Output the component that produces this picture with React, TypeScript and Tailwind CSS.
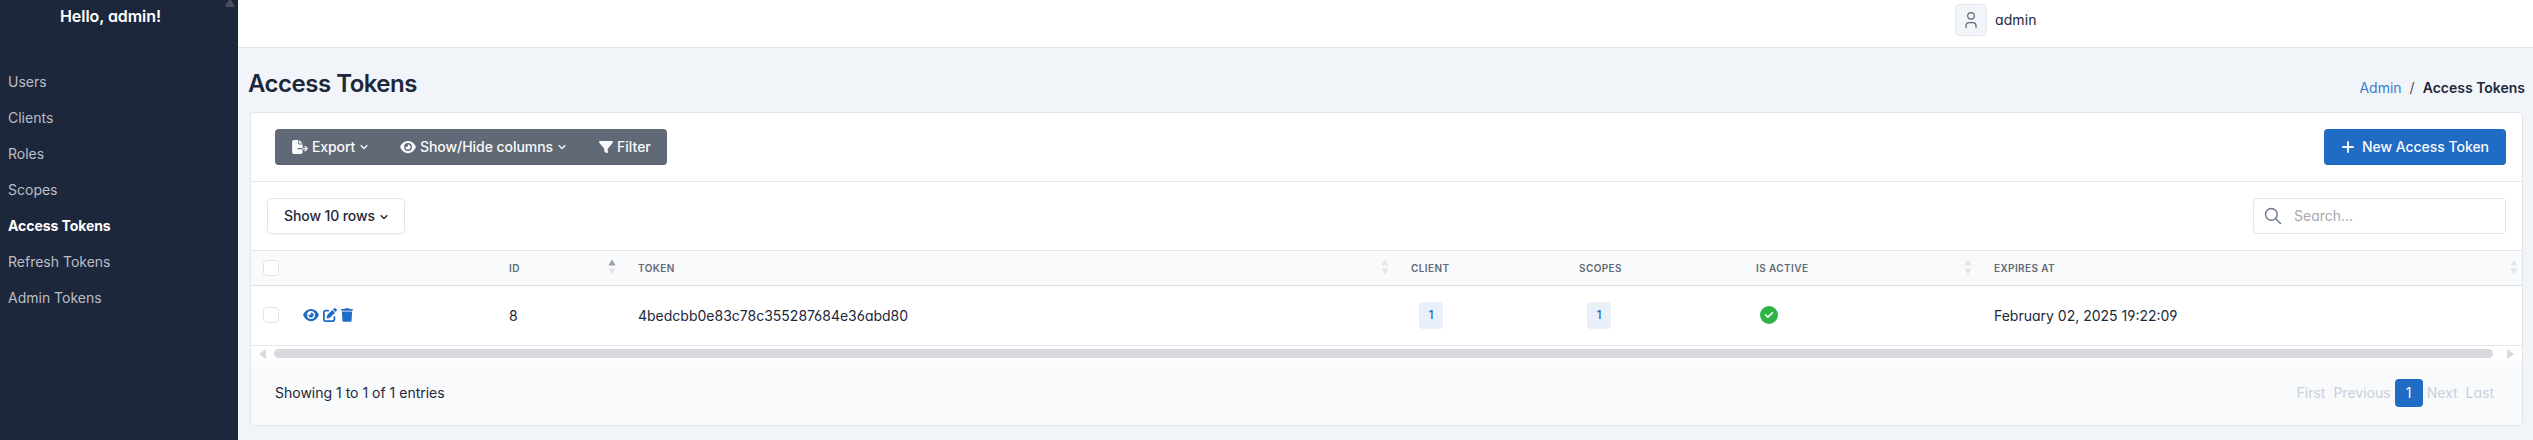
import React from "react";

const NAV = ["Users", "Clients", "Roles", "Scopes", "Access Tokens", "Refresh Tokens", "Admin Tokens"];

function Icon({ d, viewBox, className }: { d: string; viewBox: string; className: string }) {
  return (
    <svg viewBox={viewBox} className={className} fill="currentColor" aria-hidden="true">
      <path d={d} />
    </svg>
  );
}

const EYE =
  "M288 32c-80.8 0-145.500 36.800-192.600 80.600C48.600 156 17.300 208 2.500 243.700c-3.300 7.900-3.300 16.700 0 24.600C17.300 304 48.600 356 95.400 399.400C142.500 443.200 207.200 480 288 480s145.500-36.800 192.600-80.600c46.800-43.500 78.100-95.400 93-131.100c3.300-7.900 3.300-16.700 0-24.600c-14.900-35.700-46.200-87.700-93-131.100C433.500 68.800 368.800 32 288 32zM144 256a144 144 0 1 1 288 0 144 144 0 1 1 -288 0zm144-64c0 35.300-28.700 64-64 64c-7.100 0-13.900-1.200-20.300-3.300c-5.500-1.800-11.900 1.600-11.700 7.400c.3 6.900 1.300 13.800 3.200 20.700c13.700 51.200 66.400 81.600 117.600 67.900s81.600-66.400 67.900-117.600c-11.100-41.500-47.800-69.400-88.600-71.100c-5.800-.2-9.200 6.100-7.400 11.700c2.100 6.400 3.300 13.200 3.300 20.300z";
const PEN =
  "M471.600 21.400c-21.900-21.900-57.300-21.900-79.200 0L362.300 51.700l97.900 97.900 30.100-30.100c21.900-21.900 21.900-57.300 0-79.200L471.600 21.400zm-299.200 220c-6.100 6.100-10.800 13.600-13.500 21.900l-29.600 88.800c-2.900 8.600-.6 18.100 5.800 24.600s15.900 8.700 24.600 5.800l88.800-29.600c8.200-2.700 15.700-7.400 21.900-13.500L437.700 172.300 339.700 74.300 172.400 241.400zM96 64C43 64 0 107 0 160L0 416c0 53 43 96 96 96l256 0c53 0 96-43 96-96l0-96c0-17.700-14.300-32-32-32s-32 14.300-32 32l0 96c0 17.700-14.300 32-32 32L96 448c-17.700 0-32-14.300-32-32l0-256c0-17.700 14.300-32 32-32l96 0c17.700 0 32-14.300 32-32s-14.300-32-32-32L96 64z";
const TRASH =
  "M135.200 17.700L128 32 32 32C14.300 32 0 46.300 0 64S14.300 96 32 96l384 0c17.700 0 32-14.300 32-32s-14.300-32-32-32l-96 0-7.200-14.300C307.400 6.800 296.300 0 284.200 0L163.800 0c-12.100 0-23.200 6.800-28.600 17.700zM416 128L32 128 53.200 467c1.600 25.300 22.600 45 47.900 45l245.800 0c25.300 0 46.300-19.700 47.900-45L416 128z";
const EXPORT =
  "M0 64C0 28.700 28.700 0 64 0L224 0l0 128c0 17.700 14.300 32 32 32l128 0 0 128-168 0c-13.300 0-24 10.700-24 24s10.700 24 24 24l168 0 0 112c0 35.300-28.700 64-64 64L64 512c-35.300 0-64-28.700-64-64L0 64zM384 336l0-48 110.100 0-39-39c-9.400-9.400-9.400-24.600 0-33.900s24.600-9.400 33.900 0l80 80c9.400 9.400 9.400 24.600 0 33.900l-80 80c-9.400 9.400-24.600 9.400-33.900 0s-9.400-24.600 0-33.900l39-39L384 336zm0-208l-128 0L256 0 384 128z";
const FUNNEL =
  "M3.900 54.900C10.500 40.900 24.500 32 40 32l432 0c15.500 0 29.500 8.900 36.100 22.900s4.600 30.500-5.200 42.500L320 320.900 320 448c0 12.100-6.800 23.200-17.700 28.600s-23.800 4.300-33.500-3l-64-48c-8.100-6-12.800-15.500-12.800-25.600l0-79.100L9 97.300C-.7 85.400-2.800 68.800 3.900 54.900z";
const CHECK =
  "M256 512A256 256 0 1 0 256 0a256 256 0 1 0 0 512zM369 209L241 337c-9.400 9.400-24.600 9.400-33.900 0l-64-64c-9.400-9.400-9.400-24.600 0-33.900s24.600-9.400 33.900 0l47 47L335 175c9.400-9.400 24.600-9.400 33.900 0s9.400 24.600 0 33.900z";

function Caret() {
  return (
    <svg viewBox="0 0 8 6" className="mt-px ml-[5px] h-[6px] w-2" fill="none" stroke="currentColor" strokeWidth="1.300" aria-hidden="true">
      <path d="M.7 1.200 4 4.500 7.300 1.200" />
    </svg>
  );
}

function Sort({ up = false }: { up?: boolean }) {
  return (
    <svg viewBox="0 0 8 16" className="h-4 w-2" aria-hidden="true">
      <path d="M4 0.500 7.600 6.500H0.400Z" fill={up ? "#9b9fa6" : "#e3e5e8"} />
      <path d="M4 15.500 7.600 9.500H0.400Z" fill="#e3e5e8" />
    </svg>
  );
}

function Checkbox() {
  return <span className="block size-4 rounded border border-[#e0e2e5] bg-white" />;
}

const COLS = "grid grid-cols-[258px_129px_773px_168px_177px_238px_1fr]";
const TH = "flex items-center justify-between";

export default function App() {
  return (
    <div className="flex h-[440px] w-[2533px] overflow-hidden bg-[#f1f5f9] font-['Inter',sans-serif] text-sm leading-5 text-[#1d273b] [font-feature-settings:'cv03','cv04','cv11']">
      <aside className="relative w-[238px] shrink-0 bg-[#1d273b]">
        <h1 className="pt-[6px] pl-[60px] text-base leading-5 font-semibold tracking-[-0.06px] text-white">Hello, admin!</h1>
        <svg viewBox="0 0 10 8" className="absolute top-0 right-[3px] h-2 w-[10px]" aria-hidden="true">
          <path d="M4 0h2l3.500 5.500Q9.500 7 8.500 7h-7Q.5 7 .5 5.500Z" fill="#474f60" />
        </svg>
        <nav className="mt-[38px] flex flex-col pl-2">
          {NAV.map((n) => (
            <a key={n} className={n === "Access Tokens" ? "h-9 py-2 font-bold tracking-[-0.07px] text-white" : "h-9 py-2 text-[#bbbec4]"}>
              {n}
            </a>
          ))}
        </nav>
      </aside>
      <div className="flex min-w-0 flex-1 flex-col">
        <header className="h-12 shrink-0 border-b border-[#e2e4e7] bg-white pt-1 pl-[1717px]">
          <div className="flex items-center">
            <span className="flex size-8 items-center justify-center rounded border border-[#e6eaef] bg-[#f1f5f9] text-[#626976]">
              <svg viewBox="0 0 24 24" className="size-5" fill="none" stroke="currentColor" strokeWidth="1.500" strokeLinecap="round" strokeLinejoin="round">
                <path d="M8 7a4 4 0 1 0 8 0a4 4 0 0 0 -8 0M6 21v-2a4 4 0 0 1 4 -4h4a4 4 0 0 1 4 4v2" />
              </svg>
            </span>
            <span className="pl-2 tracking-[0.1px]">admin</span>
          </div>
        </header>
        <div className="flex h-16 shrink-0 items-start justify-between pr-2 pl-[10px]">
          <h2 className="pt-5 text-2xl leading-8 font-semibold tracking-[-0.5px]">Access Tokens</h2>
          <div className="flex pt-[30px]">
            <a className="text-[#3a7bcd]">Admin</a>
            <span className="px-2 text-[#4a5262]">/</span>
            <span className="font-semibold">Access Tokens</span>
          </div>
        </div>
        <main className="ml-3 flex h-[314px] w-[2273px] flex-col overflow-hidden rounded border border-[#e2e4e7] bg-white">
          <div className="flex h-[69px] shrink-0 items-center justify-between border-b border-[#e6e7e9] pr-4 pl-6">
            <div className="flex h-9 rounded border-b border-[#566072] bg-[#626976] font-medium text-[#f8fafc]">
              <button className="flex w-[109px] items-center pl-[17px] tracking-[-0.1px]">
                <Icon d={EXPORT} viewBox="0 0 576 512" className="mr-1 h-[14px] w-4" />
                Export
                <Caret />
              </button>
              <button className="flex w-[199px] items-center pl-4 tracking-[-0.05px]">
                <Icon d={EYE} viewBox="0 0 576 512" className="mr-1 h-[14px] w-4" />
                Show/Hide columns
                <Caret />
              </button>
              <button className="flex w-[84px] items-center pl-4">
                <Icon d={FUNNEL} viewBox="0 0 512 512" className="mr-1 size-[14px]" />
                Filter
              </button>
            </div>
            <button className="flex h-9 w-[182px] items-center rounded border-b border-[#1d60b4] bg-[#206bc4] pl-[14px] font-medium text-[#f8fafc]">
              <svg viewBox="0 0 20 20" className="mr-1 size-5" stroke="currentColor" strokeWidth="1.900" strokeLinecap="round">
                <path d="M10 5v10M5 10h10" />
              </svg>
              <span className="tracking-[-0.04px]">New Access Token</span>
            </button>
          </div>
          <div className="flex h-[69px] shrink-0 items-center justify-between border-b border-[#e6e7e9] px-4">
            <button className="flex h-9 w-[138px] items-center rounded border border-[#e3e5e8] pl-4 font-medium tracking-[-0.1px] shadow-[0_1px_1px_rgba(0,0,0,0.04)]">
              Show 10 rows
              <Caret />
            </button>
            <div className="flex h-9 w-[253px] items-center rounded border border-[#e3e5e8] pl-[9px] text-[#a5a9b1]">
              <svg viewBox="0 0 24 24" className="size-5 text-[#6b778c]" fill="none" stroke="currentColor" strokeWidth="1.700" strokeLinecap="round">
                <path d="M10 3a7 7 0 1 0 0 14a7 7 0 1 0 0-14M15 15l6 6" />
              </svg>
              <span className="pl-[11px]">Search...</span>
            </div>
          </div>
          <div className={`${COLS} h-[35px] shrink-0 border-b border-[#dce1e7] bg-[#f8fafc] pr-1 text-[10px] leading-4 font-semibold tracking-[0.4px] text-[#626976]`}>
            <div className="flex items-center pl-3"><Checkbox /></div>
            <div className={TH}>ID<span className="-mt-[2px] mr-[22px]"><Sort up /></span></div>
            <div className={TH}>TOKEN<span className="-mt-[2px] mr-[22px]"><Sort /></span></div>
            <div className={TH}>CLIENT</div>
            <div className={TH}>SCOPES</div>
            <div className={TH}>IS ACTIVE<span className="-mt-[2px] mr-[22px]"><Sort /></span></div>
            <div className={TH}>EXPIRES AT<span className="-mt-[2px]"><Sort /></span></div>
          </div>
          <div className={`${COLS} h-[60px] shrink-0 items-center border-b border-[#e6e7e9] pr-1`}>
            <div className="flex items-center gap-1 pb-[2px] pl-3 text-[#206bc4]">
              <Checkbox />
              <Icon d={EYE} viewBox="0 0 576 512" className="ml-5 h-[14px] w-4" />
              <Icon d={PEN} viewBox="0 0 512 512" className="size-[14px]" />
              <Icon d={TRASH} viewBox="0 0 448 512" className="h-[14px] w-3" />
            </div>
            <div>8</div>
            <div>4bedcbb0e83c78c355287684e36abd80</div>
            <div className="pb-px pl-2"><span className="flex h-[27px] w-6 items-center justify-center rounded bg-[#e9f0f9] pb-px text-xs font-medium text-[#206bc4]">1</span></div>
            <div className="pb-px pl-2"><span className="flex h-[27px] w-6 items-center justify-center rounded bg-[#e9f0f9] pb-px text-xs font-medium text-[#206bc4]">1</span></div>
            <div className="pb-px pl-1"><Icon d={CHECK} viewBox="0 0 512 512" className="size-[18px] text-[#2fb344]" /></div>
            <div>February 02, 2025 19:22:09</div>
          </div>
          <div className="flex h-[15px] shrink-0 items-center justify-between px-2">
            <svg viewBox="0 0 8 10" className="h-[10px] w-2" aria-hidden="true"><path d="M0 5 6 .5Q7 0 7 1.500v7Q7 10 6 9.500Z" fill="#d9dadf" /></svg>
            <span className="ml-[7px] h-[9px] w-[2219px] rounded-full bg-[#d9dadf]" />
            <svg viewBox="0 0 8 10" className="ml-auto h-[10px] w-2" aria-hidden="true"><path d="M8 5 2 .5Q1 0 1 1.500v7Q1 10 2 9.500Z" fill="#d9dadf" /></svg>
          </div>
          <div className="flex flex-1 items-center justify-between bg-[#f8fafc] pr-7 pl-6">
            <span>Showing 1 to 1 of 1 entries</span>
            <div className="flex items-center text-[#c6d1df]">
              <span>First</span>
              <span className="ml-2">Previous</span>
              <span className="mx-1 flex size-7 items-center justify-center rounded bg-[#206bc4] text-[#f8fafc]">1</span>
              <span>Next</span>
              <span className="ml-2">Last</span>
            </div>
          </div>
        </main>
      </div>
    </div>
  );
}
